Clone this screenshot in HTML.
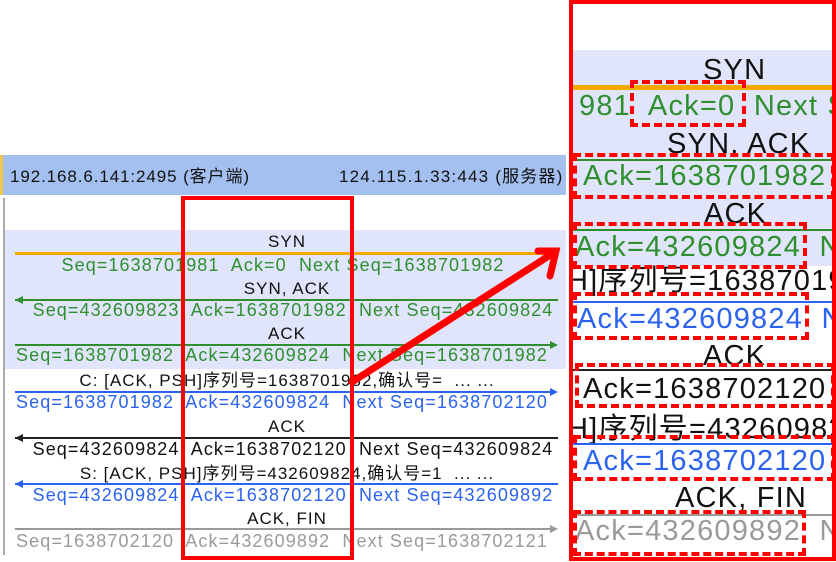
<!DOCTYPE html>
<html><head><meta charset="utf-8"><style>
body{margin:0;width:836px;height:562px;position:relative;overflow:hidden;background:#fff;font-family:"Liberation Sans","Noto Sans CJK SC",sans-serif}
.a{position:absolute}
.t{position:absolute;white-space:nowrap;transform:translateX(-50%);line-height:1;font-size:17px;letter-spacing:1px;color:#111}
.s{font-size:18px;letter-spacing:1.1px}
.r{position:absolute;white-space:nowrap;line-height:1;font-size:29px;letter-spacing:1.2px;color:#111}
.g{color:#2f8f2f !important}.b{color:#2b63f0 !important}.gr{color:#9a9a9a !important}
.d{position:absolute;border:4px dashed #f00;box-sizing:border-box}
.h{position:absolute;font-size:17px;letter-spacing:0.9px;line-height:1;white-space:nowrap;color:#111}
</style></head><body>
<!-- left panel -->
<div class="a" style="left:0;top:155px;width:566px;height:40px;background:#a4c0f0"></div>
<div class="a" style="left:0;top:155px;width:3px;height:40px;background:#f2c84a"></div>
<div class="h" style="left:10px;top:168px">192.168.6.141:2495 (客户端)</div>
<div class="h" style="left:339px;top:168px;letter-spacing:1.2px">124.115.1.33:443 (服务器)</div>
<div class="a" style="left:5px;top:230px;width:561px;height:139px;background:#e0e5fb"></div>
<div class="a" style="left:3px;top:198px;width:2px;height:357px;background:#aaa"></div>

<div class="t" style="left:287px;top:233px">SYN</div>
<div class="a" style="left:15px;top:252px;width:530px;height:3px;background:#f5a800"></div>
<div class="a" style="left:542px;top:248px;border-left:13px solid #f5a800;border-top:5px solid transparent;border-bottom:5px solid transparent"></div>
<div class="t s g" style="left:283px;top:256px">Seq=1638701981&nbsp; Ack=0&nbsp; Next Seq=1638701982</div>

<div class="t" style="left:287px;top:280px">SYN, ACK</div>
<div class="a" style="left:15px;top:299px;width:543px;height:1.5px;background:#2f8f2f"></div>
<div class="a" style="left:15px;top:296px;border-right:8px solid #2f8f2f;border-top:4px solid transparent;border-bottom:4px solid transparent"></div>
<div class="t s g" style="left:293px;top:301px">Seq=432609823&nbsp; Ack=1638701982&nbsp; Next Seq=432609824</div>

<div class="t" style="left:287px;top:325px">ACK</div>
<div class="a" style="left:15px;top:344px;width:540px;height:1.5px;background:#2f8f2f"></div>
<div class="a" style="left:550px;top:341px;border-left:8px solid #2f8f2f;border-top:4px solid transparent;border-bottom:4px solid transparent"></div>
<div class="t s g" style="left:282px;top:346px">Seq=1638701982&nbsp; Ack=432609824&nbsp; Next Seq=1638701982</div>

<div class="t" style="left:287px;top:372px">C: [ACK, PSH]序列号=1638701982,确认号=&nbsp; ... ...</div>
<div class="a" style="left:15px;top:391px;width:540px;height:1.5px;background:#2b63f0"></div>
<div class="a" style="left:550px;top:388px;border-left:8px solid #2b63f0;border-top:4px solid transparent;border-bottom:4px solid transparent"></div>
<div class="t s b" style="left:282px;top:393px">Seq=1638701982&nbsp; Ack=432609824&nbsp; Next Seq=1638702120</div>

<div class="t" style="left:287px;top:418px">ACK</div>
<div class="a" style="left:15px;top:437px;width:543px;height:1.5px;background:#222"></div>
<div class="a" style="left:15px;top:434px;border-right:8px solid #222;border-top:4px solid transparent;border-bottom:4px solid transparent"></div>
<div class="t s" style="left:293px;top:440px">Seq=432609824&nbsp; Ack=1638702120&nbsp; Next Seq=432609824</div>

<div class="t" style="left:287px;top:465px">S: [ACK, PSH]序列号=432609824,确认号=1&nbsp; ... ...</div>
<div class="a" style="left:15px;top:483px;width:543px;height:1.5px;background:#2b63f0"></div>
<div class="a" style="left:15px;top:480px;border-right:8px solid #2b63f0;border-top:4px solid transparent;border-bottom:4px solid transparent"></div>
<div class="t s b" style="left:293px;top:486px">Seq=432609824&nbsp; Ack=1638702120&nbsp; Next Seq=432609892</div>

<div class="t" style="left:287px;top:510px">ACK, FIN</div>
<div class="a" style="left:15px;top:528px;width:540px;height:1.5px;background:#999"></div>
<div class="a" style="left:550px;top:525px;border-left:8px solid #999;border-top:4px solid transparent;border-bottom:4px solid transparent"></div>
<div class="t s gr" style="left:282px;top:532px">Seq=1638702120&nbsp; Ack=432609892&nbsp; Next Seq=1638702121</div>

<div class="a" style="left:181px;top:196px;width:173px;height:364px;border:4px solid #f00;box-sizing:border-box"></div>

<!-- right panel -->
<div class="a" style="left:571px;top:0;width:263px;height:562px;overflow:hidden">
 <div class="a" style="left:0;top:50px;width:263px;height:216px;background:#e0e5fb"></div>
 <div class="r" style="left:132px;top:56px">SYN</div>
 <div class="a" style="left:0;top:85px;width:263px;height:5px;background:#f5a800"></div>
 <div class="r g" style="left:8px;top:92px">981&nbsp; Ack=0&nbsp; Next Seq</div>
 <div class="r" style="left:96px;top:130px">SYN, ACK</div>
 <div class="a" style="left:0;top:159px;width:263px;height:2px;background:#2f8f2f"></div>
 <div class="r g" style="left:12px;top:162px">Ack=1638701982</div>
 <div class="r" style="left:133px;top:200px">ACK</div>
 <div class="a" style="left:0;top:229px;width:263px;height:2px;background:#2f8f2f"></div>
 <div class="r g" style="left:4px;top:233px">Ack=432609824&nbsp; N</div>
 <div class="r" style="left:-4px;top:267px">H]序列号=1638701982</div>
 <div class="a" style="left:0;top:301px;width:263px;height:2px;background:#2b63f0"></div>
 <div class="r b" style="left:6px;top:305px">Ack=432609824&nbsp; N</div>
 <div class="r" style="left:132px;top:342px">ACK</div>
 <div class="a" style="left:0;top:369px;width:263px;height:2px;background:#222"></div>
 <div class="r" style="left:12px;top:375px">Ack=1638702120</div>
 <div class="r" style="left:-4px;top:415px">H]序列号=432609824</div>
 <div class="a" style="left:0;top:443px;width:263px;height:2px;background:#2b63f0"></div>
 <div class="r b" style="left:12px;top:447px">Ack=1638702120</div>
 <div class="r" style="left:104px;top:484px">ACK, FIN</div>
 <div class="a" style="left:0;top:514px;width:263px;height:2px;background:#999"></div>
 <div class="r gr" style="left:4px;top:517px">Ack=432609892&nbsp; N</div>
</div>
<div class="d" style="left:630px;top:80px;width:116px;height:47px"></div>
<div class="d" style="left:573px;top:153px;width:262px;height:46px"></div>
<div class="d" style="left:573px;top:222px;width:234px;height:47px"></div>
<div class="d" style="left:573px;top:292px;width:236px;height:48px"></div>
<div class="d" style="left:575px;top:363px;width:260px;height:45px"></div>
<div class="d" style="left:573px;top:435px;width:262px;height:46px"></div>
<div class="d" style="left:573px;top:510px;width:233px;height:46px"></div>
<div class="a" style="left:569px;top:0;width:267px;height:561px;border:4px solid #f00;box-sizing:border-box"></div>

<svg class="a" style="left:0;top:0" width="836" height="562">
 <g stroke="#f00" stroke-width="7" stroke-linecap="round" fill="none">
  <line x1="352" y1="382" x2="555" y2="252"/>
  <polyline points="538,251 556,251 550,276"/>
 </g>
</svg>
</body></html>
